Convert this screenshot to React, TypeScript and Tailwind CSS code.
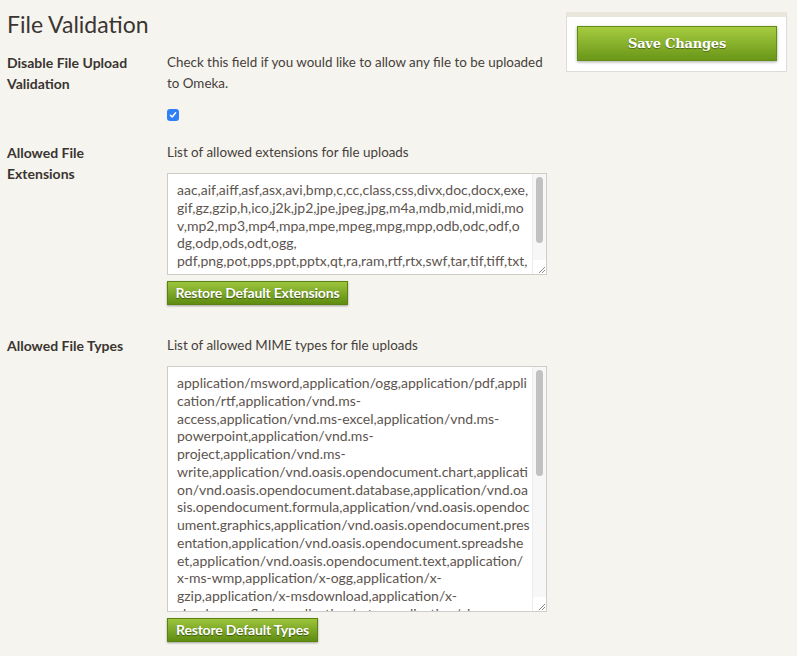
import React from 'react';

const EXTENSION_LINES = [
  'aac,aif,aiff,asf,asx,avi,bmp,c,cc,class,css,divx,doc,docx,exe,',
  'gif,gz,gzip,h,ico,j2k,jp2,jpe,jpeg,jpg,m4a,mdb,mid,midi,mo',
  'v,mp2,mp3,mp4,mpa,mpe,mpeg,mpg,mpp,odb,odc,odf,o',
  'dg,odp,ods,odt,ogg,',
  'pdf,png,pot,pps,ppt,pptx,qt,ra,ram,rtf,rtx,swf,tar,tif,tiff,txt,',
  'wav,wax,wma,wmv,wmx,wri,xla,xls,xlsx,xlt,xlw,zip',
];

const MIME_LINES = [
  'application/msword,application/ogg,application/pdf,appli',
  'cation/rtf,application/vnd.ms-',
  'access,application/vnd.ms-excel,application/vnd.ms-',
  'powerpoint,application/vnd.ms-',
  'project,application/vnd.ms-',
  'write,application/vnd.oasis.opendocument.chart,applicati',
  'on/vnd.oasis.opendocument.database,application/vnd.oa',
  'sis.opendocument.formula,application/vnd.oasis.opendoc',
  'ument.graphics,application/vnd.oasis.opendocument.pres',
  'entation,application/vnd.oasis.opendocument.spreadshe',
  'et,application/vnd.oasis.opendocument.text,application/',
  'x-ms-wmp,application/x-ogg,application/x-',
  'gzip,application/x-msdownload,application/x-',
  'shockwave-flash,application/x-tar,application/zip',
];

interface FakeTextareaProps {
  lines: string[];
  heightClass: string;
  thumbClass: string;
}

// textarea drawn as a box so the wrapped lines stay where they are in the shot
const FakeTextarea: React.FC<FakeTextareaProps> = ({ lines, heightClass, thumbClass }) => (
  <div className={`flex w-[380px] ${heightClass} mt-[10px] bg-white border border-[#cfcdc8]`}>
    <div className="flex-1 overflow-hidden pl-[9px] pt-[7px] text-[14px] leading-[17.75px] text-[#5d5550]">
      {lines.map(line => (
        <div key={line} className="whitespace-nowrap">{line}</div>
      ))}
    </div>
    <div className="w-[14px] flex flex-col bg-[#f7f7f7] border-l border-[#ececec]">
      <div className="flex-1 pt-[3px] px-[3px]">
        <div className={`w-full ${thumbClass} rounded-full bg-[#c1c1c1]`} />
      </div>
      <div className="h-[14px] bg-white flex items-end justify-end">
        <svg width="10" height="10" viewBox="0 0 10 10">
          <path d="M9 3 L3 9 M9 6 L6 9" stroke="#8a8a8a" strokeWidth="1" />
        </svg>
      </div>
    </div>
  </div>
);

const GreenButton: React.FC<{ label: string; widthClass: string }> = ({ label, widthClass }) => (
  <button
    className={`${widthClass} h-[24px] mt-[6px] bg-gradient-to-b from-[#9cc43c] to-[#5f8d10] border border-[#5c8212] text-white font-bold text-[14px] leading-none shadow-[0_1px_2px_rgba(0,0,0,0.35)] [text-shadow:0_1px_1px_rgba(0,0,0,0.45)] tracking-[-0.2px]`}
  >
    {label}
  </button>
);

const App: React.FC = () => {
  return (
    <div className="w-[797px] h-[656px] overflow-hidden bg-[#f5f4ef] font-['Lato','Noto_Sans',sans-serif] text-[#463f3a] flex">
      <div className="w-[566px] pl-[7px] shrink-0">
        <h2 className="text-[23px] leading-[30px] mt-[9px] text-[#3b3431]">File Validation</h2>

        <div className="flex mt-[13px] text-[14px] leading-[21px]">
          <div className="w-[160px] font-bold text-[#3b3431]">
            Disable File Upload<br />Validation
          </div>
          <div className="flex-1">
            <p className="text-[13.4px]">
              Check this field if you would like to allow any file to be uploaded<br />to Omeka.
            </p>
            <div className="mt-[15px] w-[12px] h-[12px] rounded-[3px] bg-[#2f80f6] flex items-center justify-center">
              <svg width="8" height="8" viewBox="0 0 8 8">
                <path d="M1.5 4.2 L3.2 6 L6.6 1.8" stroke="white" strokeWidth="1.5" fill="none" strokeLinecap="round" strokeLinejoin="round" />
              </svg>
            </div>
          </div>
        </div>

        <div className="flex mt-[21px] text-[14px] leading-[21px]">
          <div className="w-[160px] font-bold text-[#3b3431]">
            Allowed File<br />Extensions
          </div>
          <div className="flex-1">
            <p className="text-[13.4px]">List of allowed extensions for file uploads</p>
            <FakeTextarea lines={EXTENSION_LINES} heightClass="h-[102px]" thumbClass="h-[66px]" />
            <GreenButton label="Restore Default Extensions" widthClass="w-[181px]" />
          </div>
        </div>

        <div className="flex mt-[30px] text-[14px] leading-[21px]">
          <div className="w-[160px] font-bold text-[#3b3431]">Allowed File Types</div>
          <div className="flex-1">
            <p className="text-[13.4px]">List of allowed MIME types for file uploads</p>
            <FakeTextarea lines={MIME_LINES} heightClass="h-[246px]" thumbClass="h-[106px]" />
            <GreenButton label="Restore Default Types" widthClass="w-[151px]" />
          </div>
        </div>
      </div>

      <div className="pt-[12px]">
        <div className="w-[221px] bg-white border border-[#dedcd6] border-t-[5px] border-t-[#e9e6dc] px-[10px] pt-[9px] pb-[10px]">
          <button className="w-[200px] h-[35px] bg-gradient-to-b from-[#a6cb3f] to-[#6a9717] border border-[#638c14] text-white font-bold text-[13px] tracking-[-0.2px] font-['DejaVu_Serif',serif] shadow-[0_1px_3px_rgba(0,0,0,0.35)] [text-shadow:0_1px_1px_rgba(0,0,0,0.4)]">
            Save Changes
          </button>
        </div>
      </div>
    </div>
  );
};

export default App;
